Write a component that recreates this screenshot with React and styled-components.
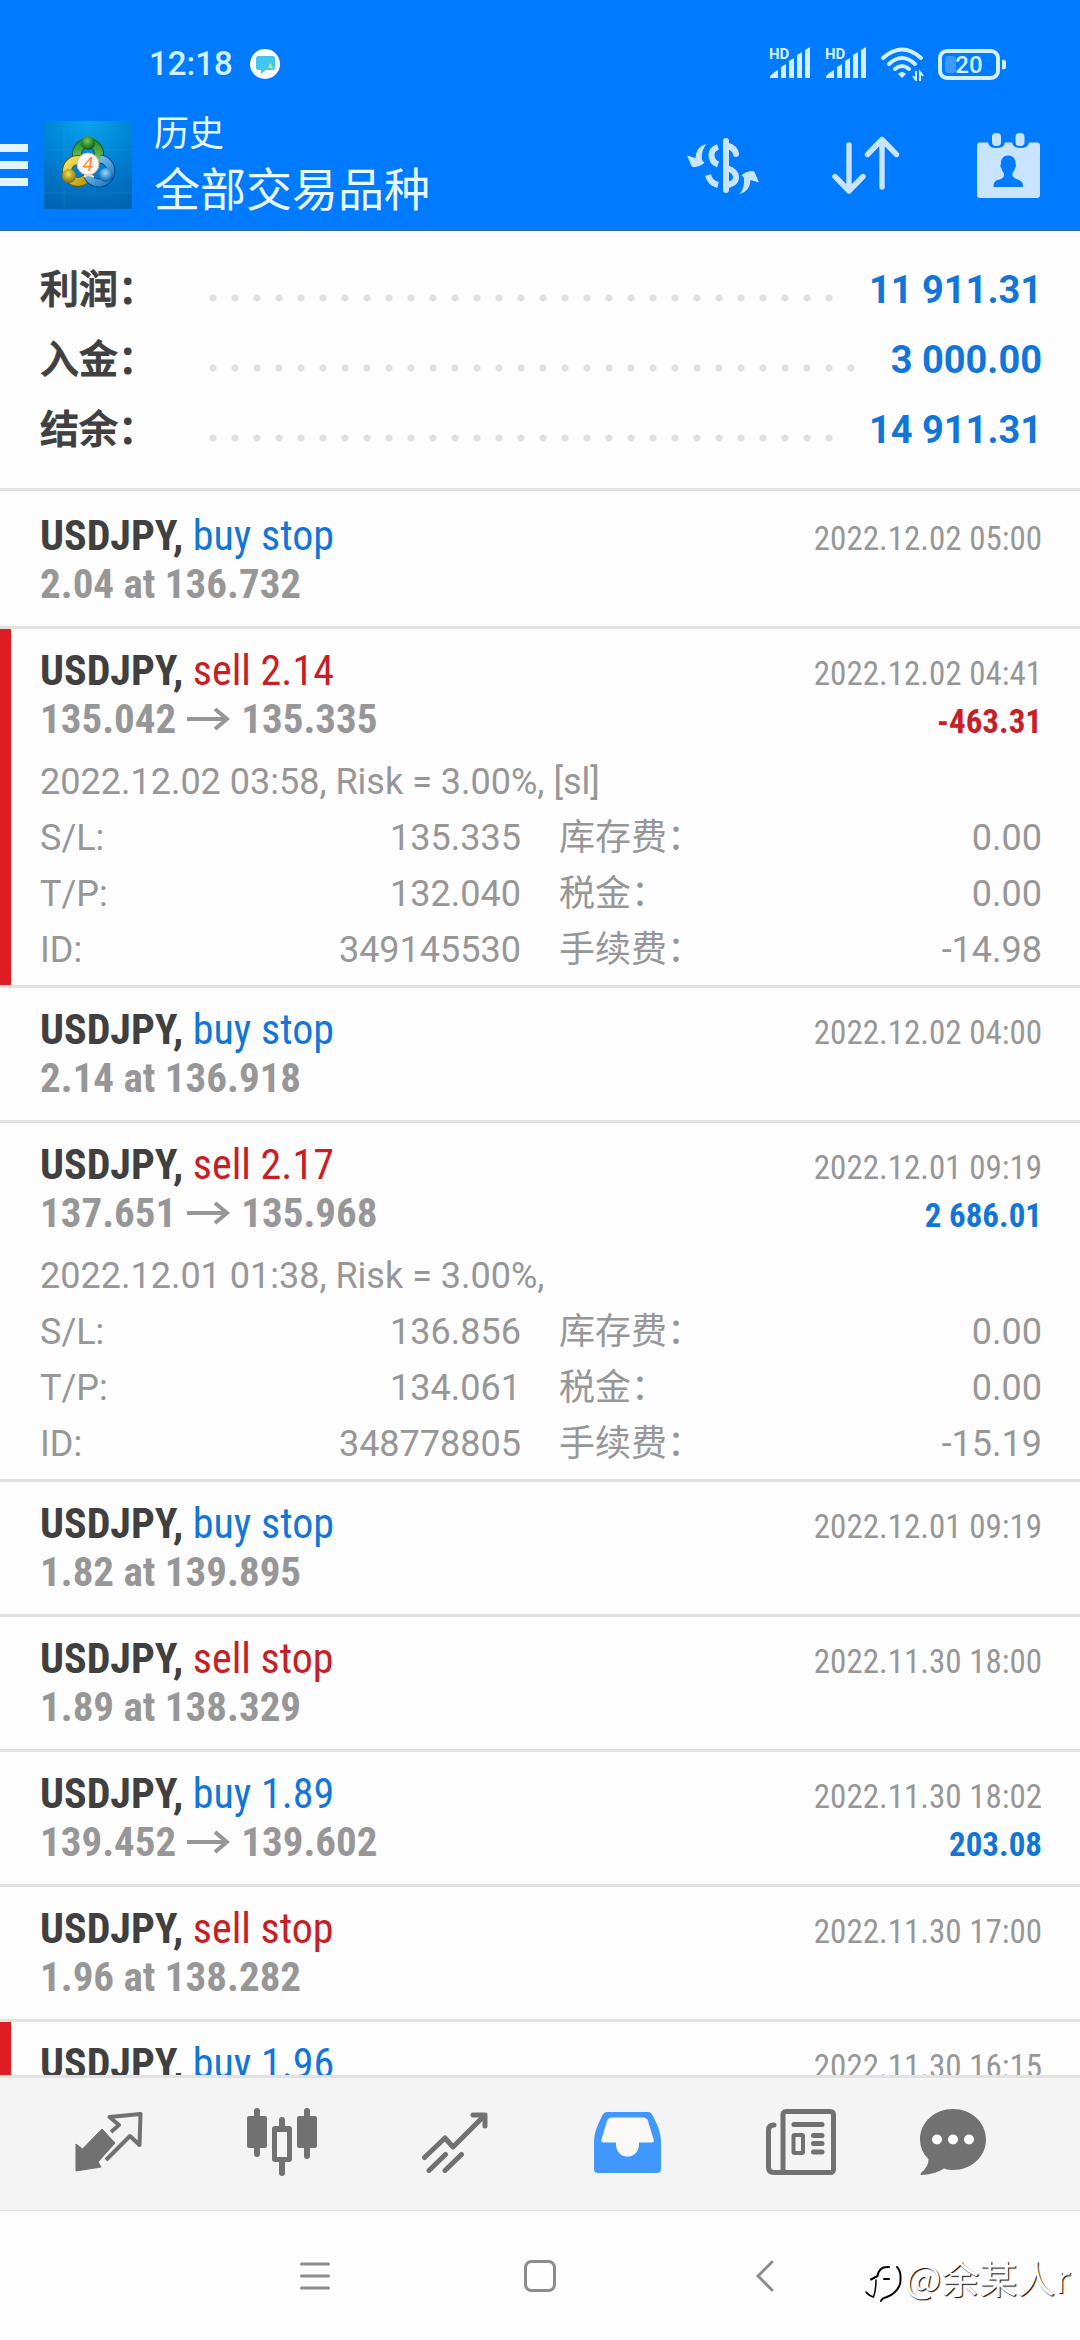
import React from 'react';
import styled, { createGlobalStyle } from 'styled-components';

const color = {
   header: '#007aff',
   headerIcon: '#c8e4ff',
   dark: '#404040',
   gray: '#979797',
   blue: '#1276d9',
   red: '#c62026',
   bar: '#de1d22',
   line: '#e2e2e2',
   tab: '#717171',
   tabActive: '#4098fc',
};

const summary = [
   { label: '利润：', total: '11 911.31' },
   { label: '入金：', total: '3 000.00' },
   { label: '结余：', total: '14 911.31' },
];

const history = [
   { type: 'buy stop', date: '2022.12.02 05:00', price: '2.04 at 136.732' },
   {
      type: 'sell 2.14',
      date: '2022.12.02 04:41',
      open: '135.042',
      close: '135.335',
      profit: '-463.31',
      marked: true,
      comment: '2022.12.02 03:58, Risk = 3.00%, [sl]',
      details: [
         ['S/L:', '135.335', '库存费：', '0.00'],
         ['T/P:', '132.040', '税金：', '0.00'],
         ['ID:', '349145530', '手续费：', '-14.98'],
      ],
   },
   { type: 'buy stop', date: '2022.12.02 04:00', price: '2.14 at 136.918' },
   {
      type: 'sell 2.17',
      date: '2022.12.01 09:19',
      open: '137.651',
      close: '135.968',
      profit: '2 686.01',
      comment: '2022.12.01 01:38, Risk = 3.00%,',
      details: [
         ['S/L:', '136.856', '库存费：', '0.00'],
         ['T/P:', '134.061', '税金：', '0.00'],
         ['ID:', '348778805', '手续费：', '-15.19'],
      ],
   },
   { type: 'buy stop', date: '2022.12.01 09:19', price: '1.82 at 139.895' },
   { type: 'sell stop', date: '2022.11.30 18:00', price: '1.89 at 138.329' },
   {
      type: 'buy 1.89',
      date: '2022.11.30 18:02',
      open: '139.452',
      close: '139.602',
      profit: '203.08',
   },
   { type: 'sell stop', date: '2022.11.30 17:00', price: '1.96 at 138.282' },
   { type: 'buy 1.96', date: '2022.11.30 16:15', marked: true },
];

const SignalIcon = () => (
   <svg width="42" height="34" viewBox="0 0 42 34" fill="currentColor" overflow="visible">
      <text x="0" y="12" fontSize="15" fontWeight="700" fontFamily="Roboto, sans-serif">
         HD
      </text>
      <path d="M1 31V29Q5 25 9 23V31ZM12 31V20L17 17V31ZM20 31V14L25 11V31ZM28 31V8L33 5V31ZM36 31V3L41 0V31Z" />
   </svg>
);

const WifiIcon = () => (
   <svg width="43" height="34" viewBox="0 0 43 34" fill="none" stroke="currentColor">
      <path d="M2 11Q21 -6 40 11" strokeWidth="4" strokeLinecap="round" />
      <path d="M8 17Q21 5 34 17" strokeWidth="4" strokeLinecap="round" />
      <path d="M14 22Q21 16 28 22" strokeWidth="4" strokeLinecap="round" />
      <path d="M17 27Q21 23 25 27L21 31Z" fill="currentColor" stroke="none" />
      <path d="M35 24V33L32 29M39 34V25L42 29" strokeWidth="2" />
   </svg>
);

const BatteryIcon = () => (
   <svg width="68" height="32" viewBox="0 0 68 32">
      <rect x="2" y="3" width="58" height="27" rx="7" fill="none" stroke="currentColor" strokeWidth="4" />
      <rect x="7" y="8" width="11" height="17" rx="3" fill="#3a98ff" />
      <path d="M64 12Q68 11 68 14V19Q68 22 64 21Z" fill="currentColor" />
      <text x="31" y="25" fontSize="24" fontWeight="500" textAnchor="middle" fill="currentColor" fontFamily="Roboto, sans-serif">
         20
      </text>
   </svg>
);

const MessageBadge = () => (
   <svg width="30" height="30" viewBox="0 0 30 30">
      <circle cx="15" cy="15" r="15" fill="#fff" />
      <path d="M8 7H23Q25 7 25 9V19Q25 21 23 21H16L11 25V21H8Q6 21 6 19V9Q6 7 8 7Z" fill="#42c8f0" />
      <path d="M18 19L20.500 14L23 19Z" fill="#c8f060" />
   </svg>
);

const AppLogo = () => (
   <svg width="88" height="88" viewBox="0 0 88 88">
      <defs>
         <radialGradient id="sky" cx="50%" cy="0%" r="100%">
            <stop offset="0" stopColor="#08a4ee" />
            <stop offset="0.6" stopColor="#007dd0" />
            <stop offset="1" stopColor="#0065b4" />
         </radialGradient>
         <linearGradient id="green" x2="0" y2="1">
            <stop offset="0" stopColor="#2e9434" />
            <stop offset="1" stopColor="#8cd060" />
         </linearGradient>
         <linearGradient id="gold" x2="1" y2="1">
            <stop offset="0" stopColor="#f2e25c" />
            <stop offset="1" stopColor="#b09a14" />
         </linearGradient>
         <linearGradient id="azure" x2="1" y2="1">
            <stop offset="0" stopColor="#9ad4f6" />
            <stop offset="1" stopColor="#1878c4" />
         </linearGradient>
         <radialGradient id="greenBall" cx="45%" cy="35%" r="60%">
            <stop offset="0" stopColor="#78c850" />
            <stop offset="1" stopColor="#0e6420" />
         </radialGradient>
         <radialGradient id="goldBall" cx="45%" cy="35%" r="60%">
            <stop offset="0" stopColor="#f0e060" />
            <stop offset="1" stopColor="#8a7408" />
         </radialGradient>
         <radialGradient id="blueBall" cx="45%" cy="35%" r="60%">
            <stop offset="0" stopColor="#98dcff" />
            <stop offset="1" stopColor="#0c64b4" />
         </radialGradient>
      </defs>
      <rect width="88" height="88" fill="url(#sky)" />
      <path d="M0 29H88M0 72H88M20 0V88" stroke="#4ab8f0" strokeOpacity="0.18" fill="none" />
      <g fill="none">
         <circle cx="44" cy="33" r="11" stroke="#14562a" strokeWidth="10" />
         <circle cx="44" cy="33" r="11" stroke="url(#green)" strokeWidth="8" />
         <circle cx="34" cy="50" r="11" stroke="#665808" strokeWidth="10" />
         <circle cx="34" cy="50" r="11" stroke="url(#gold)" strokeWidth="8" />
         <path d="M56 38A12 12 0 1 1 43 52" stroke="#0a4884" strokeWidth="9" />
         <path d="M56 38A12 12 0 1 1 43 52" stroke="url(#azure)" strokeWidth="7" />
         <path d="M36 39Q43 36 46 46M50 56Q43 52 40 56" stroke="#dff4e8" strokeWidth="2" />
      </g>
      <circle cx="44" cy="22" r="7" fill="url(#greenBall)" />
      <circle cx="25" cy="55" r="7" fill="url(#goldBall)" />
      <circle cx="62" cy="54" r="7" fill="url(#blueBall)" />
      <circle cx="44" cy="43" r="11" fill="#fdf8f4" stroke="#c8b8a0" />
      <text x="44" y="50" fontSize="20" fontStyle="italic" textAnchor="middle" fill="#ff8a3c" fontFamily="Roboto, sans-serif">
         4
      </text>
   </svg>
);

const CurrencyIcon = () => (
   <svg width="72" height="57" viewBox="0 0 72 57" fill="none" stroke="currentColor" strokeWidth="6">
      <path d="M39 4V53" strokeLinecap="round" />
      <path d="M31 10Q24.500 12 24.500 18Q24.500 25 31 27.500" />
      <path d="M21 38Q23 46 31 48" />
      <path d="M41 9Q48 11 49 17" strokeLinecap="round" />
      <path d="M41 31.500Q49 34 49 40.500Q49 46 41 48" />
      <g fill="currentColor" stroke="none">
         <path d="M19.300 7Q9 9.500 8.500 21L0 18.500L4.500 29Q5.500 30.500 8 30Q13 29.500 17.500 26L15 23Q14 14 19.300 7Z" />
         <path d="M52.700 57Q63 54.500 63.500 43L72 45.500L67.500 35Q66.500 33.500 64 34Q59 34.500 54.500 38L57 41Q58 50 52.700 57Z" />
      </g>
   </svg>
);

const SortIcon = () => (
   <svg width="68" height="58" viewBox="0 0 68 58" fill="none" stroke="currentColor" strokeWidth="5.400" strokeLinecap="round" strokeLinejoin="round">
      <path d="M17 9V55M3 40.500L17 55L31 40.500" />
      <path d="M50 51V3.500M35.500 18.500L50 3.500L64.500 18.500" />
   </svg>
);

const CalendarIcon = () => (
   <svg width="63" height="65" viewBox="0 0 63 65" fill="currentColor">
      <path d="M3 9.500H11Q12 15 19.500 15T28 9.500H35Q36 15 43.500 15T52 9.500H60Q63 9.500 63 12.500V62Q63 65 60 65H3Q0 65 0 62V12.500Q0 9.500 3 9.500Z" />
      <rect x="15" y="0" width="9" height="13" rx="4" />
      <rect x="38.500" y="0" width="9" height="13" rx="4" />
      <path
         d="M31 22.500C36 22.500 39 26 38.500 31C39.500 32 39 34 38 35C37.500 38 36 39 35.500 40V43Q37 46 42 47Q46 48.500 46 53Q46 54 45 54H17.500Q16.500 54 16.500 53Q16.500 48.500 20.500 47Q25.500 46 27 43V40C26 39 25 38 24.500 35C23 34 23 32 24 31C23.500 26 26.500 22.500 31 22.500Z"
         fill={color.header}
      />
   </svg>
);

const QuotesIcon = () => (
   <svg width="68" height="60" viewBox="0 0 68 60">
      <path d="M36 20L44 13L34.500 5L65.500 2L64.500 33L55 24L31 48" fill="none" stroke="currentColor" strokeWidth="4" strokeLinejoin="round" />
      <path d="M27 17L40 31L23 50L26 55L1 59V32L7.500 37Z" fill="currentColor" stroke="currentColor" strokeLinejoin="round" />
   </svg>
);

const CandlesIcon = () => (
   <svg width="70" height="68" viewBox="0 0 70 68" fill="currentColor">
      <rect x="7" y="0" width="6" height="49" rx="3" />
      <rect x="0" y="8" width="20" height="32" rx="2" />
      <rect x="32" y="9" width="6" height="14" rx="3" />
      <rect x="32" y="50" width="6" height="18" rx="3" />
      <path d="M28 18H42Q45 18 45 21V51Q45 54 42 54H28Q25 54 25 51V21Q25 18 28 18ZM30 24V49H40V24Z" fillRule="evenodd" />
      <rect x="57" y="0" width="6" height="51" rx="3" />
      <rect x="50" y="8" width="20" height="32" rx="2" />
   </svg>
);

const TradeIcon = () => (
   <svg width="66" height="61" viewBox="0 0 66 61" fill="none" stroke="currentColor" strokeWidth="5" strokeLinecap="round" strokeLinejoin="round">
      <path d="M2.500 45.500L23 26L31 35L62 4M51 3H63V14" />
      <path d="M7 58.500L23.500 42.500M23 58.500L39.500 42.500" />
   </svg>
);

const InboxIcon = () => (
   <svg width="67" height="61" viewBox="0 0 67 61">
      <path d="M17 5H50L60 30H45L40 44H28L22 30H7Z" fill="#fbf9f8" />
      <path
         d="M13 0H54Q57 0 59 4C65 16 67 22 67 31V57Q67 61 63 61H4Q0 61 0 57V31C0 22 2 16 8 4Q10 0 13 0ZM18 5.500Q14 5.500 13 9L7.500 27Q7 30.500 9 30.500H22V33A11.500 11.500 0 0 0 45 33V30.500H58Q60.500 30.500 59.500 27L54 9Q53 5.500 49 5.500Z"
         fill="currentColor"
         fillRule="evenodd"
      />
   </svg>
);

const NewsIcon = () => (
   <svg width="70" height="66" viewBox="0 0 70 66" fill="none" stroke="currentColor" strokeWidth="5" strokeLinecap="round">
      <rect x="17" y="2.500" width="50.500" height="61" rx="3" />
      <path d="M8 16Q2.500 16 2.500 21V58Q2.500 63.500 8 63.500H20" />
      <path d="M28 15.500H56M47.500 26.500H56M47.500 34.500H56M47.500 43H56" />
      <rect x="27.500" y="26" width="9.500" height="18" rx="1" strokeWidth="4" />
   </svg>
);

const ChatIcon = () => (
   <svg width="66" height="66" viewBox="0 0 66 66">
      <path
         d="M33 0C51 0 66 13 66 30.500S51 61 33 61Q28 61 24 59.500Q14 66 1 66Q0 65.500 1 64Q9 57 8.500 50Q0 42 0 30.500C0 13 15 0 33 0Z"
         fill="currentColor"
      />
      <g fill="#fff">
         <circle cx="17" cy="30.500" r="5" />
         <circle cx="33" cy="30.500" r="5" />
         <circle cx="49" cy="30.500" r="5" />
      </g>
   </svg>
);

const ArrowIcon = () => (
   <svg width="43" height="24" viewBox="0 0 43 24" fill="none" stroke="currentColor" strokeWidth="4">
      <path d="M0 12H40M28 2L40 12L28 22" />
   </svg>
);

const StampLogo = () => (
   <svg width="38" height="40" viewBox="0 0 38 40" fill="none" stroke="#000" strokeLinecap="round">
      <path d="M24 3Q14 2 12.500 12L6 15.500" strokeWidth="2" />
      <path d="M11 16Q11 26 8.500 33Q3 31 1 28" strokeWidth="1.500" />
      <path d="M32 3Q37 8 35 20Q32 29 22 33Q17 34 16 37" strokeWidth="2" />
      <path d="M19 15H24" strokeWidth="2" />
   </svg>
);

const tabs = [
   { name: 'Quotes', Icon: QuotesIcon },
   { name: 'Charts', Icon: CandlesIcon },
   { name: 'Trade', Icon: TradeIcon },
   { name: 'History', Icon: InboxIcon, active: true },
   { name: 'News', Icon: NewsIcon },
   { name: 'Messages', Icon: ChatIcon },
];

const Deal = ({ deal }) => {
   const { type, date, price, open, close, profit, marked, comment, details } = deal;

   return (
      <DealItem $marked={marked} $open={!!details}>
         <DealLine>
            <Symbol>
               USDJPY, <Side $sell={type.startsWith('sell')}>{type}</Side>
            </Symbol>
            <DealDate>{date}</DealDate>
         </DealLine>
         <DealLine>
            {price && <Price>{price}</Price>}
            {open && (
               <Price>
                  {open}
                  <ArrowIcon />
                  {close}
               </Price>
            )}
            {profit && <Profit $loss={profit.startsWith('-')}>{profit}</Profit>}
         </DealLine>
         {details && (
            <Details>
               <Comment>{comment}</Comment>
               {details.map(([name, value, feeName, fee]) => (
                  <DetailRow key={name}>
                     <DetailName>{name}</DetailName>
                     <DetailValue>{value}</DetailValue>
                     <FeeName>{feeName}</FeeName>
                     <DetailValue>{fee}</DetailValue>
                  </DetailRow>
               ))}
            </Details>
         )}
      </DealItem>
   );
};

const App = () => {
   return (
      <Screen>
         <GlobalStyle />
         <Header>
            <StatusBar>
               <Clock>12:18</Clock>
               <MessageBadge />
               <StatusIcons>
                  <SignalIcon />
                  <SignalIcon />
                  <WifiIcon />
                  <BatteryIcon />
               </StatusIcons>
            </StatusBar>
            <Toolbar>
               <MenuButton aria-label="Menu">
                  <MenuLine />
                  <MenuLine />
                  <MenuLine />
               </MenuButton>
               <AppLogo />
               <Titles>
                  <Title>历史</Title>
                  <Subtitle>全部交易品种</Subtitle>
               </Titles>
               <ToolButton aria-label="Currency">
                  <CurrencyIcon />
               </ToolButton>
               <ToolButton aria-label="Sort">
                  <SortIcon />
               </ToolButton>
               <ToolButton aria-label="Period">
                  <CalendarIcon />
               </ToolButton>
            </Toolbar>
         </Header>

         <Summary>
            {summary.map(({ label, total }) => (
               <SummaryRow key={label}>
                  <SummaryLabel>{label}</SummaryLabel>
                  <Dots />
                  <SummaryTotal>{total}</SummaryTotal>
               </SummaryRow>
            ))}
         </Summary>

         <DealList>
            {history.map((deal) => (
               <Deal key={deal.date + deal.type} deal={deal} />
            ))}
         </DealList>

         <TabBar>
            {tabs.map(({ name, Icon, active }) => (
               <Tab key={name} aria-label={name} $active={active}>
                  <Icon />
               </Tab>
            ))}
         </TabBar>

         <SystemBar>
            <SystemButton aria-label="Recents">
               <svg width="30" height="30" viewBox="0 0 30 30" fill="none" stroke="currentColor" strokeWidth="3" strokeLinecap="round">
                  <path d="M1.500 3H28.500M1.500 15H28.500M1.500 27H28.500" />
               </svg>
            </SystemButton>
            <SystemButton aria-label="Home">
               <svg width="32" height="32" viewBox="0 0 32 32" fill="none" stroke="currentColor" strokeWidth="3">
                  <rect x="1.500" y="1.500" width="29" height="29" rx="6" />
               </svg>
            </SystemButton>
            <SystemButton aria-label="Back">
               <svg width="18" height="32" viewBox="0 0 18 32" fill="none" stroke="currentColor" strokeWidth="3" strokeLinecap="round">
                  <path d="M16 2L2 16L16 30" />
               </svg>
            </SystemButton>
            <Stamp>
               <StampLogo />
               <span>@余某人r</span>
            </Stamp>
         </SystemBar>
      </Screen>
   );
};

const GlobalStyle = createGlobalStyle`
   * {
      box-sizing: border-box;
   }
   body {
      margin: 0;
      font-family: Roboto, 'Noto Sans CJK SC', sans-serif;
      background-color: #fdfdfd;
   }
   h1, h2, p, ul {
      margin: 0;
      padding: 0;
      font-weight: 400;
   }
   button {
      border: none;
      background: none;
      padding: 0;
      cursor: pointer;
   }
   svg {
      display: block;
      flex-shrink: 0;
   }
`;

const Screen = styled.div`
   display: flex;
   flex-direction: column;
   height: 100vh;
   overflow: hidden;
`;

const Header = styled.header`
   flex-shrink: 0;
   background-color: ${color.header};
   border-bottom: 1px solid #2a6aa8;
`;

const StatusBar = styled.div`
   display: flex;
   align-items: center;
   height: 100px;
   padding: 28px 74px 0 149px;
   gap: 17px;
   color: #d2f0ff;
`;

const Clock = styled.span`
   font-size: 33px;
   line-height: 40px;
   font-weight: 500;
`;

const StatusIcons = styled.div`
   display: flex;
   align-items: center;
   gap: 14px;
   margin-left: auto;
`;

const Toolbar = styled.div`
   display: flex;
   align-items: center;
   height: 130px;
`;

const MenuButton = styled.button`
   display: flex;
   flex-direction: column;
   gap: 9px;
   width: 28px;
   margin-right: 16px;
`;

const MenuLine = styled.span`
   width: 100%;
   height: 8px;
   background-color: #e2f4ff;
`;

const Titles = styled.div`
   flex: 1;
   padding-left: 22px;
   color: #e8f8ff;
   white-space: nowrap;
`;

const Title = styled.h1`
   font-size: 35px;
   line-height: 50px;
`;

const Subtitle = styled.h2`
   font-size: 46px;
   line-height: 60px;
`;

const ToolButton = styled.button`
   display: flex;
   justify-content: center;
   width: 143px;
   color: ${color.headerIcon};
`;

const Summary = styled.section`
   flex-shrink: 0;
   padding: 24px 38px 23px 40px;
   border-bottom: 3px solid ${color.line};
`;

const SummaryRow = styled.div`
   display: flex;
   align-items: center;
   height: 70px;
   line-height: 70px;
`;

const SummaryLabel = styled.span`
   width: 169px;
   font-size: 39px;
   font-weight: 500;
   -webkit-text-stroke: 1px ${color.dark};
   color: ${color.dark};
`;

const Dots = styled.span`
   flex: 1;
   height: 8px;
   margin: 16px 22px 0 0;
   background: radial-gradient(circle at 4px 4px, #e0e0e0 3px, transparent 4px) repeat-x;
   background-size: 22px 8px;
`;

const SummaryTotal = styled.span`
   font-size: 38px;
   font-weight: 700;
   color: ${color.blue};
`;

const DealList = styled.ul`
   flex: 1;
   min-height: 0;
   overflow: hidden;
   padding-top: 3px;
   list-style: none;
   font-family: 'Roboto Condensed', 'Liberation Sans Narrow', Roboto, sans-serif;
`;

const DealItem = styled.li`
   padding: 18px 38px ${({ $open }) => ($open ? '7px' : '18px')} 40px;
   border-bottom: 3px solid ${color.line};
   box-shadow: ${({ $marked }) => ($marked ? `inset 11px 0 ${color.bar}` : 'none')};
`;

const DealLine = styled.div`
   display: flex;
   justify-content: space-between;
   align-items: baseline;
   height: 48px;
   line-height: 48px;
   white-space: nowrap;
`;

const Symbol = styled.span`
   font-size: 42px;
   font-weight: 700;
   color: ${color.dark};
`;

const Side = styled.span`
   font-weight: 400;
   color: ${({ $sell }) => ($sell ? color.red : color.blue)};
`;

const DealDate = styled.time`
   font-size: 33px;
   color: ${color.gray};
`;

const Price = styled.span`
   display: flex;
   align-items: center;
   gap: 11px;
   font-size: 41px;
   font-weight: 700;
   color: ${color.gray};
`;

const Profit = styled.span`
   font-size: 33px;
   font-weight: 700;
   color: ${({ $loss }) => ($loss ? color.red : color.blue)};
`;

const Details = styled.div`
   margin-top: 11px;
   font-family: Roboto, 'Noto Sans CJK SC', sans-serif;
   font-size: 36px;
   line-height: 56px;
   white-space: nowrap;
   color: ${color.gray};
`;

const Comment = styled.p`
   height: 56px;
`;

const DetailRow = styled.div`
   display: grid;
   grid-template-columns: 100px 381fr 200px 321fr;
   height: 56px;
`;

const DetailName = styled.span``;

const FeeName = styled.span`
   padding-left: 38px;
`;

const DetailValue = styled.span`
   text-align: right;
`;

const TabBar = styled.nav`
   display: grid;
   grid-template-columns: repeat(5, 173fr) 132fr;
   flex-shrink: 0;
   height: 136px;
   padding: 0 61px 4px 22px;
   background-color: #f4f4f4;
   border-top: 3px solid ${color.line};
   border-bottom: 1px solid ${color.line};
`;

const Tab = styled.button`
   display: flex;
   align-items: center;
   justify-content: center;
   color: ${({ $active }) => ($active ? color.tabActive : color.tab)};
`;

const SystemBar = styled.div`
   position: relative;
   display: flex;
   align-items: center;
   justify-content: center;
   flex-shrink: 0;
   height: 129px;
`;

const SystemButton = styled.button`
   display: flex;
   justify-content: center;
   width: 225px;
   color: #8c8c8c;
`;

/* author stamp floating over the system bar */
const Stamp = styled.div`
   position: absolute;
   right: 10px;
   bottom: 36px;
   display: flex;
   align-items: flex-start;
   gap: 2px;
   font-family: 'Noto Sans CJK SC', sans-serif;
   font-size: 38px;
   line-height: 26px;
   color: #fff;
   text-shadow: 1px 1px 1px #000;
`;

export default App;
